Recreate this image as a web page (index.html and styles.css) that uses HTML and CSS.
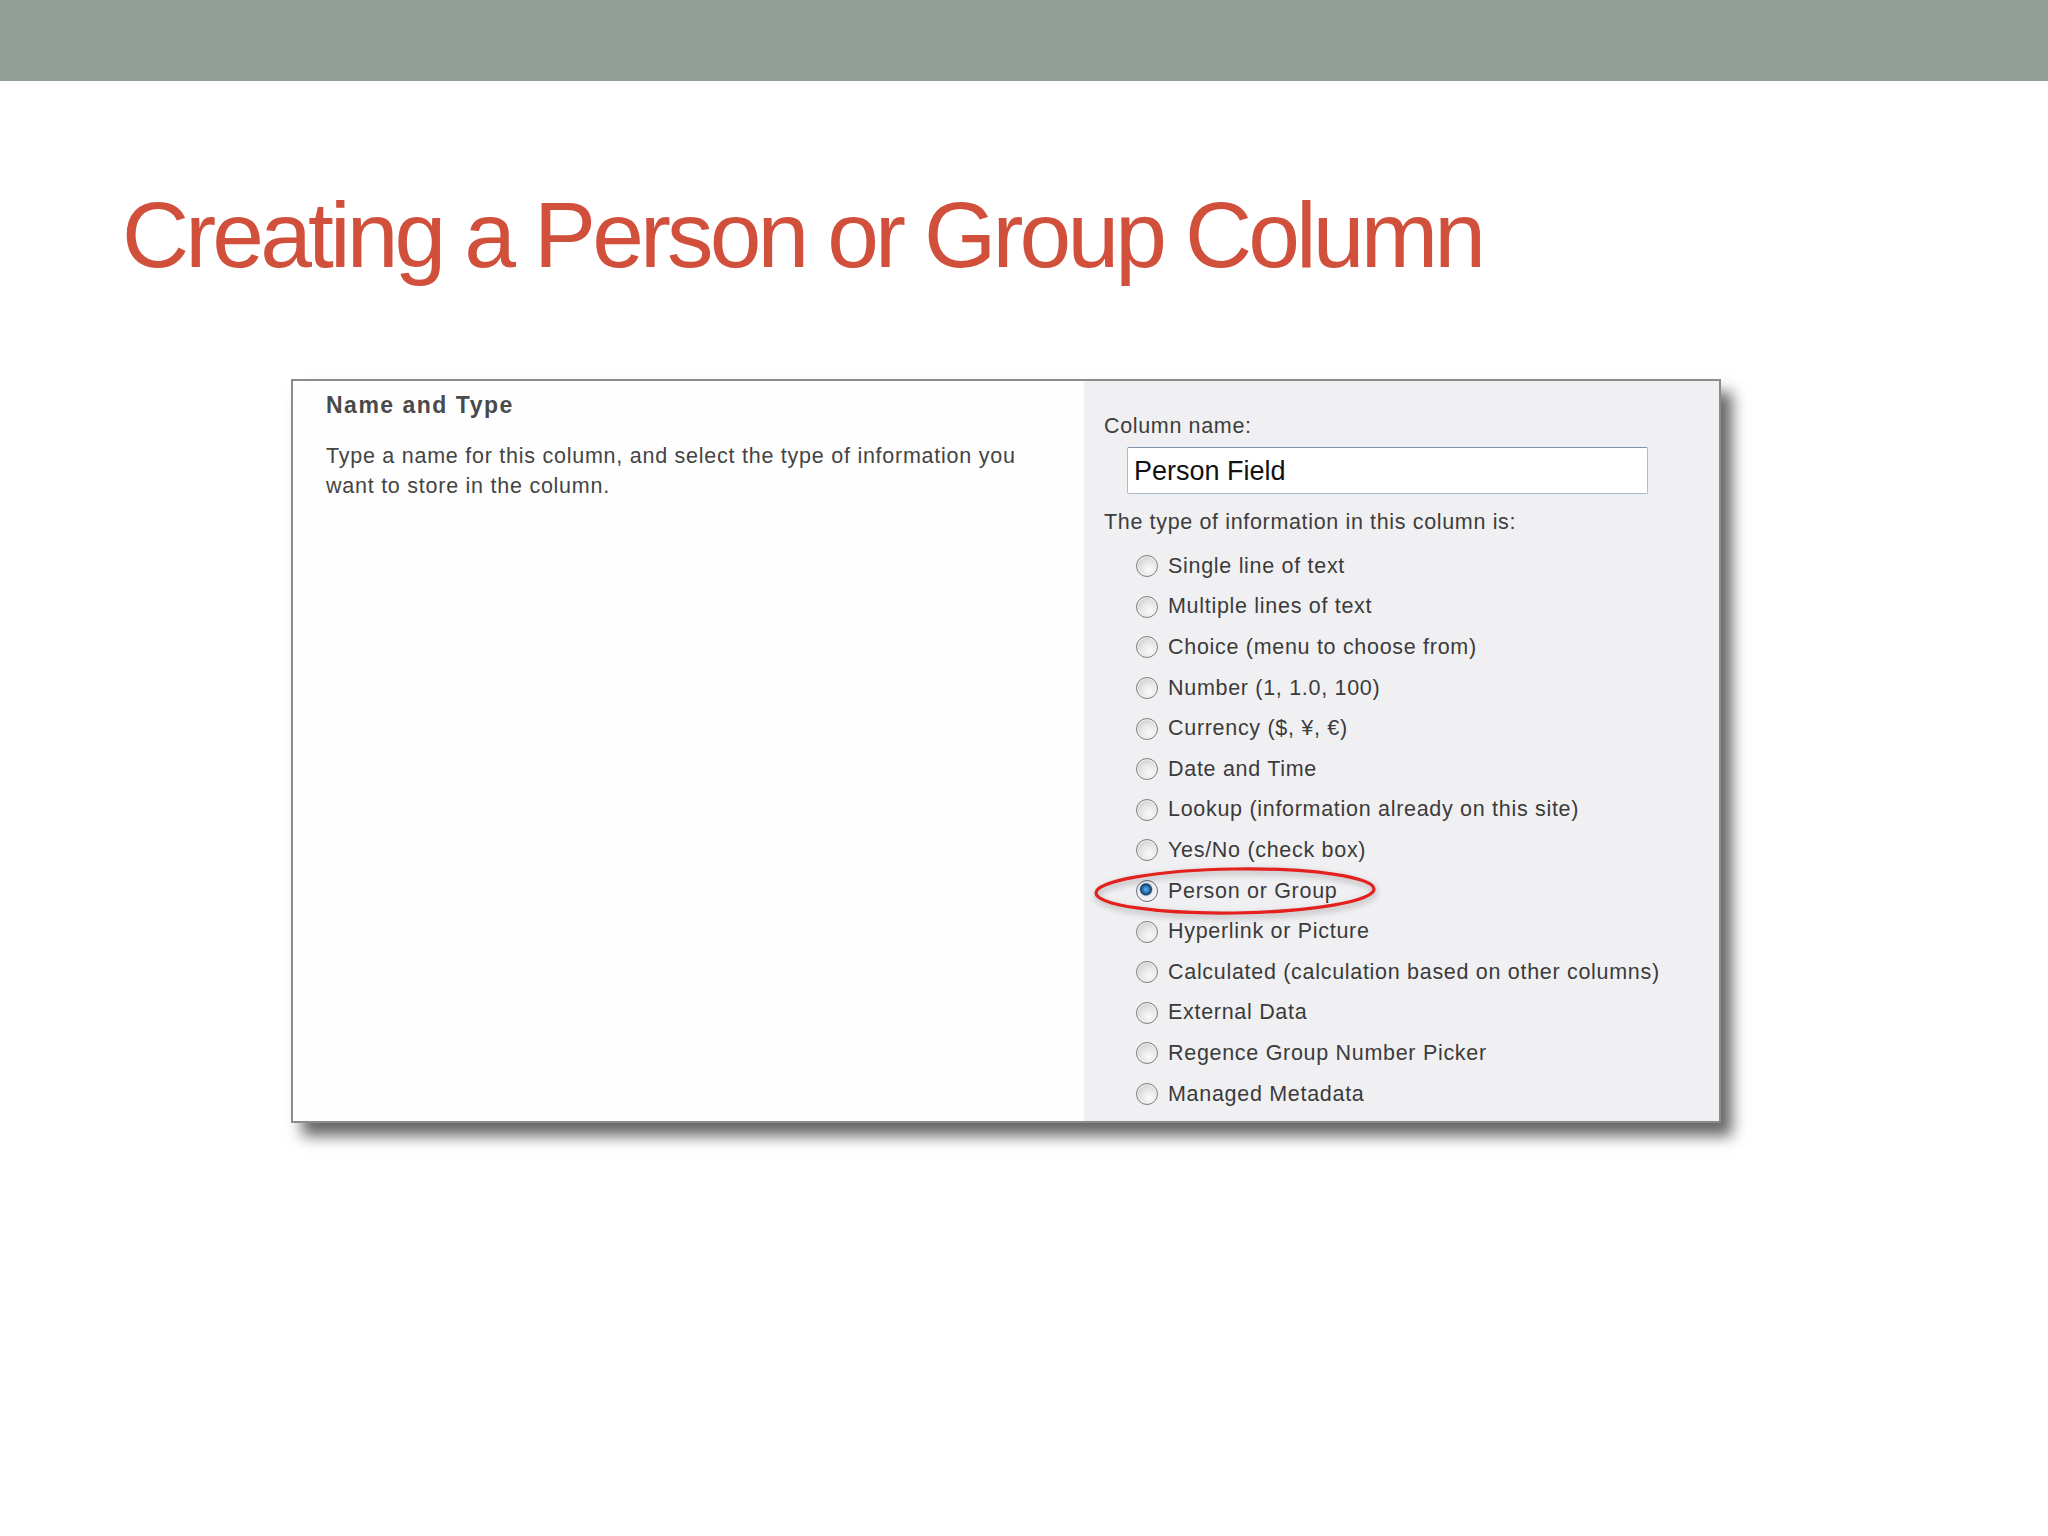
FILE: index.html
```html
<!DOCTYPE html>
<html>
<head>
<meta charset="utf-8">
<link rel="stylesheet" href="styles.css">
</head>
<body>
<div class="band"></div>
<h1 class="title">Creating a Person or Group Column</h1>
<div class="shot">
  <div class="pane-left">
    <div class="section-title">Name and Type</div>
    <p class="desc">Type a name for this column, and select the type of information you want to store in the column.</p>
  </div>
  <div class="pane-right">
    <div class="field-label">Column name:</div>
    <div class="input">Person Field</div>
    <div class="field-label type-label">The type of information in this column is:</div>
    <ul class="options">
      <li class="opt"><span class="radio"></span><span>Single line of text</span></li>
      <li class="opt"><span class="radio"></span><span>Multiple lines of text</span></li>
      <li class="opt"><span class="radio"></span><span>Choice (menu to choose from)</span></li>
      <li class="opt"><span class="radio"></span><span>Number (1, 1.0, 100)</span></li>
      <li class="opt"><span class="radio"></span><span>Currency ($, ¥, €)</span></li>
      <li class="opt"><span class="radio"></span><span>Date and Time</span></li>
      <li class="opt"><span class="radio"></span><span>Lookup (information already on this site)</span></li>
      <li class="opt"><span class="radio"></span><span>Yes/No (check box)</span></li>
      <li class="opt selected"><span class="radio checked"></span><span>Person or Group</span>
        <svg class="ring" width="300" height="64" viewBox="0 0 300 64">
          <ellipse cx="150" cy="31" rx="139" ry="22" fill="none" stroke="#e3211d" stroke-width="3.2" transform="rotate(-0.8 150 31)"/>
        </svg>
      </li>
      <li class="opt"><span class="radio"></span><span>Hyperlink or Picture</span></li>
      <li class="opt"><span class="radio"></span><span>Calculated (calculation based on other columns)</span></li>
      <li class="opt"><span class="radio"></span><span>External Data</span></li>
      <li class="opt"><span class="radio"></span><span>Regence Group Number Picker</span></li>
      <li class="opt"><span class="radio"></span><span>Managed Metadata</span></li>
    </ul>
  </div>
</div>
</body>
</html>
```

FILE: styles.css
```css
html, body {
  margin: 0;
  padding: 0;
  background: #ffffff;
}
body {
  font-family: "Liberation Sans", Arial, sans-serif;
  min-height: 1536px;
}
.band {
  height: 81px;
  background: #929f98;
}
.title {
  margin: 108px 0 0 122px;
  font-family: "Liberation Sans", Arial, sans-serif;
  font-weight: normal;
  font-size: 93px;
  line-height: 93px;
  letter-spacing: -3.9px;
  color: #d1503b;
  white-space: nowrap;
}
.shot {
  margin: 97px 0 0 291px;
  width: 1430px;
  height: 744px;
  box-sizing: border-box;
  border: 2px solid #8b8b8b;
  display: flex;
  box-shadow: 11px 13px 14px rgba(0, 0, 0, 0.6);
  background: #ffffff;
}
.pane-left {
  width: 791px;
  box-sizing: border-box;
  padding: 9px 0 0 33px;
  background: #fefefe;
}
.section-title {
  font-size: 23px;
  font-weight: bold;
  line-height: 30px;
  letter-spacing: 1.5px;
  color: #4a4a4a;
}
.desc {
  margin: 21px 0 0 0;
  width: 712px;
  font-size: 21.5px;
  line-height: 30px;
  letter-spacing: 0.75px;
  color: #444444;
}
.pane-right {
  flex: 1;
  background: #f0f0f2;
  padding: 31px 0 0 20px;
}
.field-label {
  font-size: 21.5px;
  line-height: 28px;
  letter-spacing: 0.65px;
  color: #3d3d3d;
}
.input {
  margin: 7px 0 0 23px;
  width: 521px;
  height: 47px;
  box-sizing: border-box;
  border: 1px solid #a8bcd0;
  border-top-color: #7c94ad;
  border-radius: 2px;
  background: #ffffff;
  padding: 0 0 0 6px;
  font-size: 27px;
  line-height: 47px;
  color: #111111;
}
.type-label {
  margin-top: 14px;
}
.options {
  list-style: none;
  margin: 10px 0 0 0;
  padding: 0 0 0 32px;
}
.opt {
  position: relative;
  height: 40.6px;
  display: flex;
  align-items: center;
  gap: 10px;
  font-size: 21.5px;
  letter-spacing: 0.7px;
  color: #3b3b3b;
}
.radio {
  width: 22px;
  height: 22px;
  flex: none;
  box-sizing: border-box;
  border-radius: 50%;
  border: 1.6px solid #7e7e7e;
  background: radial-gradient(circle at 62% 68%, #fbfbfb 0%, #e3e3e3 50%, #bdbdbd 100%);
  box-shadow: inset 0 0 0 1px #f4f4f4;
}
.radio.checked {
  border-color: #646c74;
  background: radial-gradient(circle at 45% 42%, #6cb6ec 0%, #2670b4 22%, #163f68 34%, #e6e9ec 42%, #f7f7f7 70%, #cdd1d4 100%);
}
.ring {
  position: absolute;
  left: -51px;
  top: -11px;
  overflow: visible;
  filter: drop-shadow(1px 3px 3px rgba(0, 0, 0, 0.3));
}
```
